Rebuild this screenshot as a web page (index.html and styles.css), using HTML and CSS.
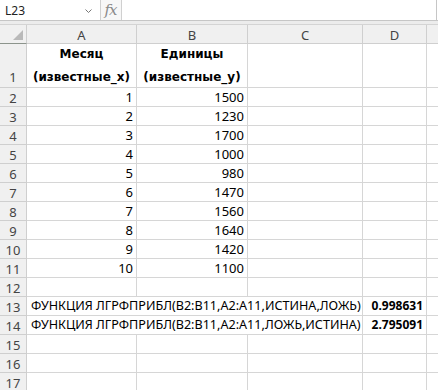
FILE: index.html
```html
<!DOCTYPE html>
<html lang="ru">
<head>
<meta charset="utf-8">
<title>ЛГРФПРИБЛ</title>
<link rel="stylesheet" href="styles.css">
</head>
<body>
<div class="app">
  <div class="fbar">
    <div class="namebox"><span class="ref">L23</span><svg class="chev" width="7" height="4" viewBox="0 0 7 4"><path d="M0.5 0.5 L3.5 3.5 L6.5 0.5" fill="none" stroke="#777" stroke-width="1"/></svg></div>
    <div class="fx"><span>fx</span></div>
    <div class="finput"></div>
  </div>
  <div class="band"></div>
  <div class="sheet">
    <div class="h corner"><svg width="10" height="10" viewBox="0 0 10 10"><path d="M10 0 L10 10 L0 10 Z" fill="#b9b9b9"/></svg></div>
    <div class="h col">A</div><div class="h col">B</div><div class="h col">C</div><div class="h col">D</div><div class="h col last"></div>

    <div class="h row tall">1</div>
    <div class="c hd"><span class="hdtxt">Месяц<br>(известные_x)</span></div><div class="c hd"><span class="hdtxt">Единицы<br>(известные_y)</span></div><div class="c"></div><div class="c"></div><div class="c last"></div>

    <div class="h row">2</div><div class="c n">1</div><div class="c n">1500</div><div class="c"></div><div class="c"></div><div class="c last"></div>
    <div class="h row">3</div><div class="c n">2</div><div class="c n">1230</div><div class="c"></div><div class="c"></div><div class="c last"></div>
    <div class="h row">4</div><div class="c n">3</div><div class="c n">1700</div><div class="c"></div><div class="c"></div><div class="c last"></div>
    <div class="h row">5</div><div class="c n">4</div><div class="c n">1000</div><div class="c"></div><div class="c"></div><div class="c last"></div>
    <div class="h row">6</div><div class="c n">5</div><div class="c n">980</div><div class="c"></div><div class="c"></div><div class="c last"></div>
    <div class="h row">7</div><div class="c n">6</div><div class="c n">1470</div><div class="c"></div><div class="c"></div><div class="c last"></div>
    <div class="h row">8</div><div class="c n">7</div><div class="c n">1560</div><div class="c"></div><div class="c"></div><div class="c last"></div>
    <div class="h row">9</div><div class="c n">8</div><div class="c n">1640</div><div class="c"></div><div class="c"></div><div class="c last"></div>
    <div class="h row">10</div><div class="c n">9</div><div class="c n">1420</div><div class="c"></div><div class="c"></div><div class="c last"></div>
    <div class="h row">11</div><div class="c n">10</div><div class="c n">1100</div><div class="c"></div><div class="c"></div><div class="c last"></div>
    <div class="h row">12</div><div class="c"></div><div class="c"></div><div class="c"></div><div class="c"></div><div class="c last"></div>

    <div class="h row">13</div><div class="c span3 t">ФУНКЦИЯ ЛГРФПРИБЛ(B2:B11,A2:A11,ИСТИНА,ЛОЖЬ)</div><div class="c n b">0.998631</div><div class="c last"></div>
    <div class="h row">14</div><div class="c span3 t">ФУНКЦИЯ ЛГРФПРИБЛ(B2:B11,A2:A11,ЛОЖЬ,ИСТИНА)</div><div class="c n b">2.795091</div><div class="c last"></div>

    <div class="h row">15</div><div class="c"></div><div class="c"></div><div class="c"></div><div class="c"></div><div class="c last"></div>
    <div class="h row">16</div><div class="c"></div><div class="c"></div><div class="c"></div><div class="c"></div><div class="c last"></div>
    <div class="h row">17</div><div class="c"></div><div class="c"></div><div class="c"></div><div class="c"></div><div class="c last"></div>
  </div>
</div>
</body>
</html>
```

FILE: styles.css
```css
* { box-sizing: border-box; }
html, body { margin: 0; padding: 0; background: #fff; }
body { width: 438px; height: 390px; overflow: hidden; font-family: "Noto Sans", "Open Sans", sans-serif; color: #000; }

.app { width: 438px; height: 390px; overflow: hidden; }

.fbar { display: flex; height: 21px; border-bottom: 1px solid #c6c6c6; background: #fff; }
.namebox { width: 101px; border-right: 1px solid #d0d0d0; display: flex; align-items: center; justify-content: space-between; padding: 0 8px 0 5px; }
.ref { font-size: 12px; color: #222; }
.chev { margin-top: 1px; }
.fx { width: 21px; border-right: 1px solid #d0d0d0; display: flex; align-items: center; justify-content: center; background: #f7f7f7; }
.fx span { font-family: "DejaVu Serif", "Liberation Serif", serif; font-style: italic; font-size: 15px; line-height: 15px; color: #8a8a8a; letter-spacing: -1px; padding-right: 1px; }
.finput { flex: 1; border-right: 1px solid #c6c6c6; margin-right: 1px; }

.band { height: 4px; background: #ececec; border-bottom: 1px solid #d4d4d4; }

.sheet {
  display: grid;
  grid-template-columns: 27px 110px 111px 115px 64px minmax(0, 1fr);
  grid-template-rows: 19px 44px repeat(16, 19px);
}

.h { background: #f0f0f0; color: #444; font-size: 13px; display: flex; align-items: center; justify-content: center; border-right: 1px solid #cfcfcf; border-bottom: 1px solid #cfcfcf; }
.corner { justify-content: flex-end; align-items: flex-end; padding: 0 3px 3px 0; border-bottom: 1px solid #8c948c; }
.col { padding-top: 1px; }
.h.last { border-right: none; }
.row { padding-top: 1px; }
.row.tall { align-items: flex-end; padding-bottom: 1px; }

.c { border-right: 1px solid #d6d6d6; border-bottom: 1px solid #d6d6d6; font-size: 13px; display: flex; align-items: flex-end; padding: 0 3px 0 3px; line-height: 18px; white-space: nowrap; overflow: hidden; }
.c.last { border-right: none; }
.n { justify-content: flex-end; }
.b { font-weight: bold; font-size: 12px; }
.hd { font-family: "DejaVu Sans", sans-serif; font-weight: bold; font-size: 12px; text-align: center; justify-content: center; padding: 0; }
.hdtxt { line-height: 23px; margin-bottom: -2px; }
.span3 { grid-column: span 3; }
.t { padding-left: 4px; font-size: 12.6px; }
```
